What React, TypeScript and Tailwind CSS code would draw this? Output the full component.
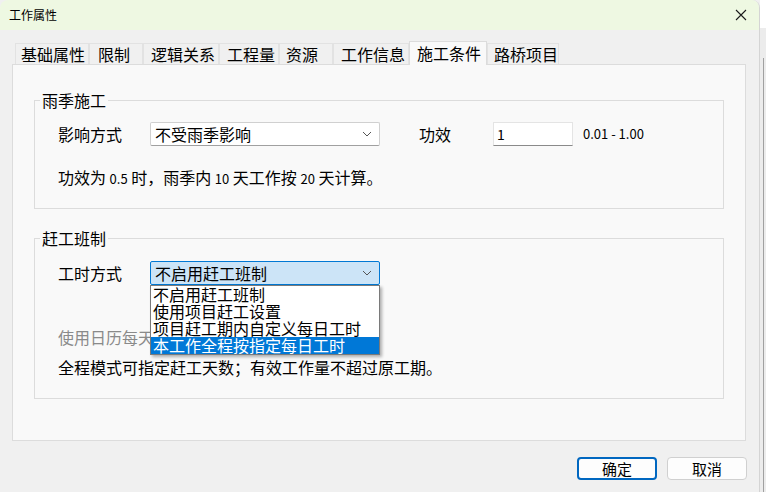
import React from 'react';
import { clsx } from 'clsx';

const FONT = "font-['Microsoft_YaHei','Noto_Sans_CJK_SC',sans-serif]";

const tabs = [
  { label: '基础属性', w: 'w-[74px]', pl: 'pl-[5px]' },
  { label: '限制', w: 'w-[54px]', pl: 'pl-[8px]' },
  { label: '逻辑关系', w: 'w-[76px]', pl: 'pl-[7px]' },
  { label: '工程量', w: 'w-[60px]', pl: 'pl-[7px]' },
  { label: '资源', w: 'w-[54px]', pl: 'pl-[6px]' },
  { label: '工作信息', w: 'w-[76px]', pl: 'pl-[7px]' },
  { label: '施工条件', w: 'w-[78px]', pl: 'pl-[7px]', active: true },
  { label: '路桥项目', w: 'w-[72px]', pl: 'pl-[6px]' },
];

const options = ['不启用赶工班制', '使用项目赶工设置', '项目赶工期内自定义每日工时', '本工作全程按指定每日工时'];

function Chevron() {
  return (
    <svg width="10" height="6" viewBox="0 0 10 6" className="shrink-0">
      <path d="M1 1 L5 5 L9 1" fill="none" stroke="#555" strokeWidth="1" />
    </svg>
  );
}

function Select({ value, open }: { value: string; open?: boolean }) {
  return (
    <div
      className={clsx(
        'flex items-center justify-between w-[230px] h-[24px] pl-[4px] pr-[7px] border rounded-[2px]',
        open ? 'bg-[#cce4f7] border-[#0078d4]' : 'bg-white border-[#d0d0d0] border-b-[#a0a0a0]'
      )}
    >
      <span className="leading-[22px]">{value}</span>
      <Chevron />
    </div>
  );
}

function GroupBox({ title, className, children }: { title: string; className?: string; children: React.ReactNode }) {
  return (
    <div className={clsx('relative ml-[21px] w-[690px] border border-[#dcdcdc] pl-[23px]', className)}>
      <span className="absolute -top-[12px] left-[5px] px-[2px] bg-[#f9f9f9] leading-[22px]">{title}</span>
      {children}
    </div>
  );
}

export default function App() {
  return (
    <div className={clsx('w-[766px] h-[492px] flex bg-[#f0f0f0] text-black text-[16px] overflow-hidden', FONT)}>
      <div className="w-[760px] h-full flex flex-col rounded-t-[8px] border-r border-[#d4d4d4] overflow-hidden">
        {/* title bar */}
        <div className="h-[30px] shrink-0 flex items-center justify-between bg-[#eef8e2] pl-[9px] pr-[9px]">
          <span className="text-[12px] leading-[16px]">工作属性</span>
          <svg width="12" height="12" viewBox="0 0 12 12" className="mr-[3px]">
            <path d="M1 1 L11 11 M11 1 L1 11" stroke="#1a1a1a" strokeWidth="1.1" />
          </svg>
        </div>

        <div className="flex-1 flex flex-col pl-[12px] pt-[11px]">
          {/* tabs */}
          <div className="flex items-end h-[23px] ml-[3px] relative z-10">
            {tabs.map((t) =>
              t.active ? (
                <div
                  key={t.label}
                  className={clsx(t.w, t.pl, 'h-[24px] -mb-px bg-[#f9f9f9] border border-b-0 border-[#dcdcdc] leading-[22px]')}
                >
                  {t.label}
                </div>
              ) : (
                <div
                  key={t.label}
                  className={clsx(t.w, t.pl, 'h-[21px] bg-[#f0f0f0] border border-b-0 border-[#e2e2e2] leading-[20px]')}
                >
                  {t.label}
                </div>
              )
            )}
          </div>

          {/* panel */}
          <div className="w-[734px] h-[377px] bg-[#f9f9f9] border border-[#dcdcdc] pt-[35px]">
            <GroupBox title="雨季施工" className="h-[109px]">
              <div className="flex items-center pt-[21px]">
                <span className="w-[92px] leading-[22px]">影响方式</span>
                <Select value="不受雨季影响" />
                <span className="ml-[39px] w-[74px] leading-[22px]">功效</span>
                <div className="w-[80px] h-[24px] bg-white border border-[#e4e4e4] border-b-[#8a8a8a] pl-[3px] leading-[22px] text-[14px]">
                  1
                </div>
                <span className="ml-[10px] text-[13px] leading-[22px]">0.01 - 1.00</span>
              </div>
              <div className="mt-[20px] leading-[22px]">
                功效为 <span className="text-[13px]">0.5</span> 时，雨季内 <span className="text-[13px]">10</span> 天工作按{' '}
                <span className="text-[13px]">20</span> 天计算。
              </div>
            </GroupBox>

            <GroupBox title="赶工班制" className="mt-[29px] h-[161px]">
              <div className="relative flex items-center pt-[22px]">
                <span className="w-[92px] leading-[22px]">工时方式</span>
                <div className="relative">
                  <Select value="不启用赶工班制" open />
                  {/* open dropdown list */}
                  <div className="absolute left-0 top-[24px] w-[230px] bg-white border border-[#7a7a7a] shadow-[2px_2px_3px_rgba(0,0,0,0.3)] z-20">
                    {options.map((o, i) => (
                      <div
                        key={o}
                        className={clsx(
                          'h-[17px] pl-[2px] leading-[17px]',
                          i === 3 ? 'bg-[#0078d7] text-white' : 'text-black'
                        )}
                      >
                        {o}
                      </div>
                    ))}
                  </div>
                </div>
              </div>
              <div className="mt-[41px] leading-[22px] text-[#8a8a8a]">使用日历每天工作时间计算</div>
              <div className="mt-[8px] leading-[22px]">全程模式可指定赶工天数；有效工作量不超过原工期。</div>
            </GroupBox>
          </div>

          {/* buttons */}
          <div className="flex justify-end gap-[10px] w-[735px] mt-[16px]">
            <button className="w-[80px] h-[23px] rounded-[4px] bg-[#fdfdfd] border-2 border-[#0067c0] text-[15px] leading-[19px]">
              确定
            </button>
            <button className="w-[80px] h-[23px] rounded-[4px] bg-[#fdfdfd] border border-[#d0d0d0] text-[15px] leading-[21px]">
              取消
            </button>
          </div>
        </div>
      </div>

      {/* background behind the dialog */}
      <div className="w-[6px] h-full flex flex-col bg-[#ececec]">
        <div className="h-[28px] bg-white" />
        <div className="flex-1 flex justify-center pt-[30px]">
          <div className="w-px h-full bg-[#a0a0a0]" />
        </div>
      </div>
    </div>
  );
}
